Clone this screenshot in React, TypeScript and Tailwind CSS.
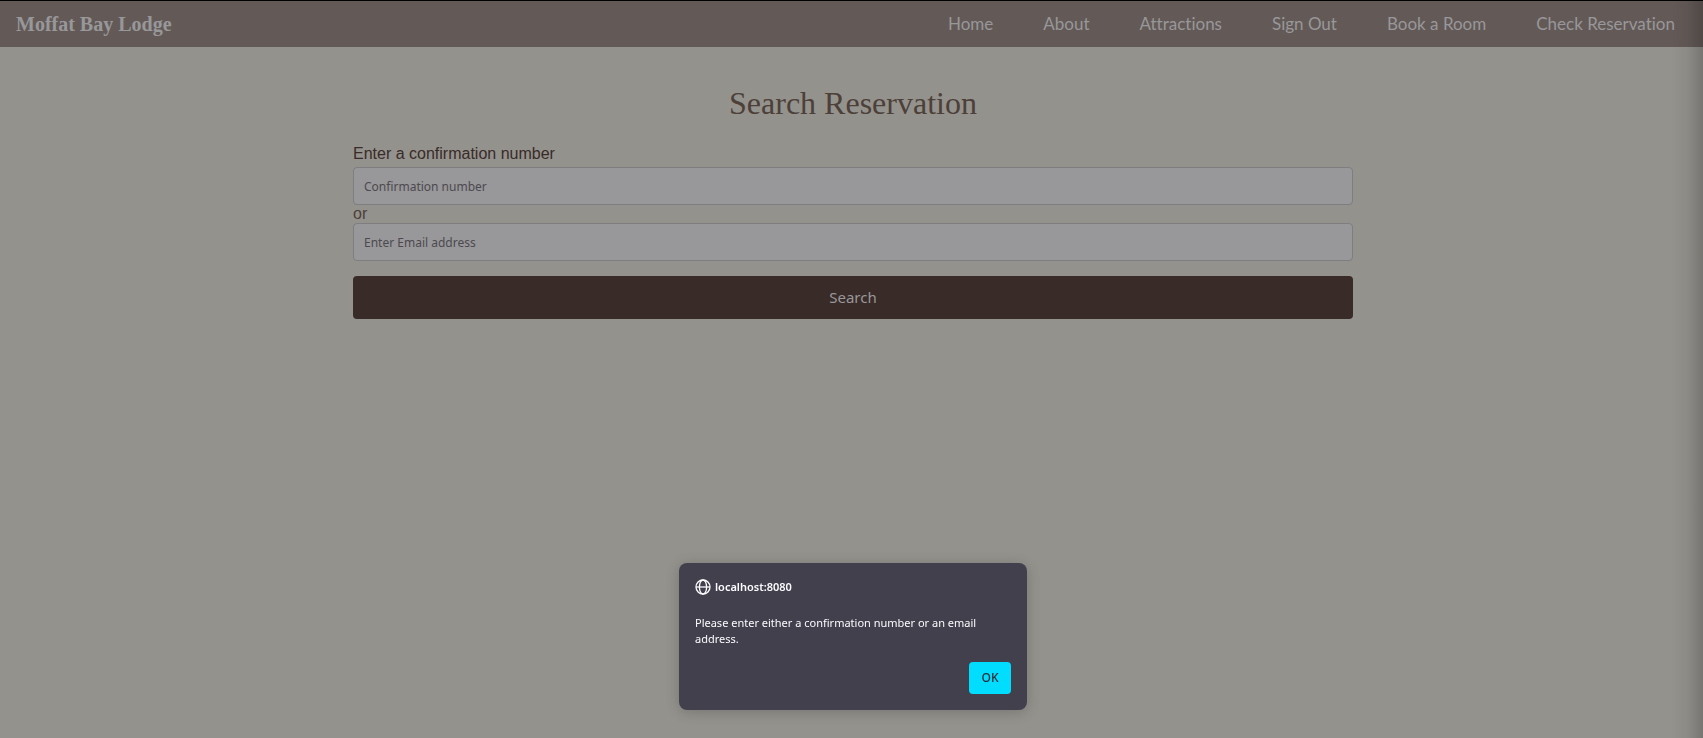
import React from "react";

const links = ["Home", "About", "Attractions", "Sign Out", "Book a Room", "Check Reservation"];

const inputClass =
  "block h-[38px] w-full rounded-[4px] border border-[#7e7d7f] bg-[#98979a] px-[10px] font-['Noto_Sans',sans-serif] text-[12px] text-[#4c4a4e] outline-none placeholder:text-[#4c4a4e]";

function GlobeIcon() {
  return (
    <svg className="size-4" viewBox="0 0 16 16" fill="none" stroke="currentColor" strokeWidth="1.3" aria-hidden="true">
      <circle cx="8" cy="8" r="7" />
      <ellipse cx="8" cy="8" rx="3.6" ry="7" />
      <path d="M1 8h14" />
    </svg>
  );
}

export default function App() {
  return (
    <div className="relative min-h-screen bg-[#94928d] font-['Liberation_Sans',Arial,sans-serif] text-base">
      <header className="flex h-[47px] items-center justify-between border-t border-black bg-[#635a57] pr-7 pl-4 text-[#98979a]">
        <a href="#" className="font-['Liberation_Serif',serif] text-[20px] font-bold">
          Moffat Bay Lodge
        </a>
        <nav className="flex gap-[50px] font-['Lato',sans-serif] text-[17px] [font-variant-ligatures:none]">
          {links.map((link) => (
            <a key={link} href="#">
              {link}
            </a>
          ))}
        </nav>
      </header>

      <main className="pt-9 pl-[3px]">
        <form className="mx-auto max-w-[1000px]" onSubmit={(e) => e.preventDefault()}>
          <h1 className="mb-[22px] text-center font-['Liberation_Serif',serif] text-[32px] leading-10 text-[#4c4039]">
            Search Reservation
          </h1>
          <label htmlFor="confirmation" className="mb-1 block leading-[18px] text-[#392b28]">
            Enter a confirmation number
          </label>
          <input id="confirmation" type="text" placeholder="Confirmation number" className={inputClass} />
          <label htmlFor="email" className="block leading-[18px] text-[#4c4039]">
            or
          </label>
          <input id="email" type="email" placeholder="Enter Email address" className={inputClass} />
          <button
            type="submit"
            className="mt-[15px] h-[43px] w-full rounded-[4px] bg-[#392b28] font-['Noto_Sans',sans-serif] text-[15px] text-[#98979a]"
          >
            Search
          </button>
        </form>
      </main>

      <div className="pointer-events-none absolute inset-y-0 right-0 w-8 bg-linear-to-r from-transparent via-black/5 to-black/20" />

      <div className="fixed inset-x-0 bottom-7 flex justify-center pl-[3px]">
        <div
          role="alertdialog"
          aria-labelledby="alert-title"
          aria-describedby="alert-message"
          className="w-[348px] rounded-[8px] bg-[#42404d] p-4 font-['Noto_Sans',sans-serif] text-[11px] leading-4 text-[#fbfbfe] shadow-[0_2px_14px_rgba(0,0,0,0.2)]"
        >
          <h2 id="alert-title" className="mb-5 flex items-center gap-1 font-semibold">
            <GlobeIcon />
            localhost:8080
          </h2>
          <p id="alert-message">Please enter either a confirmation number or an email address.</p>
          <div className="mt-[15px] flex justify-end">
            <button type="button" className="h-8 w-[42px] rounded-[4px] bg-[#00ddff] text-[12px] font-medium text-[#2b2a33]">
              OK
            </button>
          </div>
        </div>
      </div>
    </div>
  );
}
